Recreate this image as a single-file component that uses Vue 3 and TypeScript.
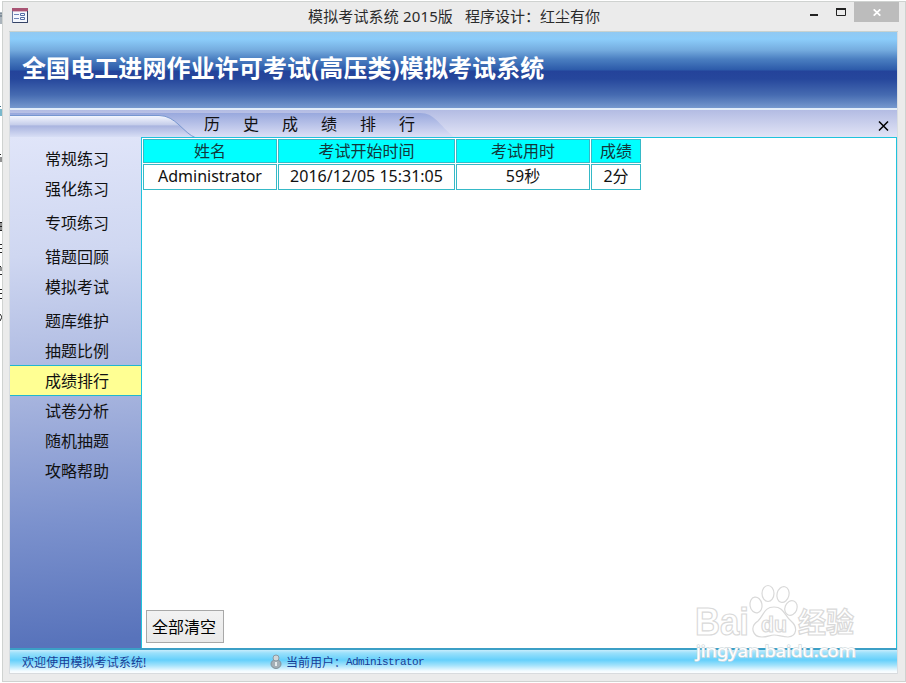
<script setup lang="ts">
import { ref } from 'vue'

interface MenuItem { label: string; spaced?: boolean }

const menu: MenuItem[] = [
  { label: '常规练习' },
  { label: '强化练习', spaced: true },
  { label: '专项练习', spaced: true },
  { label: '错题回顾' },
  { label: '模拟考试', spaced: true },
  { label: '题库维护' },
  { label: '抽题比例' },
  { label: '成绩排行' },
  { label: '试卷分析' },
  { label: '随机抽题' },
  { label: '攻略帮助' },
]
const active = ref('成绩排行')
const columns = ['姓名', '考试开始时间', '考试用时', '成绩']
const rows = ref<string[][]>([['Administrator', '2016/12/05 15:31:05', '59秒', '2分']])
</script>

<template>
  <div class="desktop">
    <svg class="behind" width="3" height="683" viewBox="0 0 3 683">
      <path d="M0 13h2M0 16h2M1 13v11" stroke="#566879" fill="none" />
      <path d="M0 106.500h1M0 110.500h1" stroke="#456f86" />
      <rect x="0" y="109" width="2" height="7" fill="#79b8cc" />
      <path d="M0 154.500h1M1 157v5M0 222.500h2M0 226.500h2M0 230.500h2M1 222v8M0 244.500h2M0 248.500h2M0 252.500h2M0 266.500h1M1 267v4M0 274.500h2M0 289.500h2M0 293.500h2M0 298.500h2M0 314l2 3l-2 4" stroke="#222" fill="none" />
    </svg>
    <main class="window">
      <header class="titlebar">
        <svg class="app-icon" width="16" height="15" viewBox="0 0 16 15">
          <rect x=".5" y=".5" width="15" height="14" fill="#f4f7fd" stroke="#65759b" />
          <rect width="16" height="3" fill="#a85373" />
          <path d="M1 3.500h14" stroke="#d8b7c9" />
          <path d="M15.500 3v11.500H1" fill="none" stroke="#354365" />
          <path d="M2 6.500h5M2 10.500h5" stroke="#6f86b8" />
          <path d="M8.500 5.500h4v2h-4zM8.500 9.500h4v2h-4z" fill="#fff" stroke="#526ca6" />
        </svg>
        <h1 class="caption"><span>模拟考试系统 2015版</span><span>程序设计：红尘有你</span></h1>
        <div class="controls">
          <button class="ctl min" aria-label="最小化"><svg width="8" height="2"><rect width="8" height="2" fill="#222" /></svg></button>
          <button class="ctl max" aria-label="最大化"><svg width="10" height="8"><path d="M.5 1v6.500h9V1" fill="none" stroke="#222" /><path d="M0 1h10" stroke="#222" stroke-width="2" /></svg></button>
          <button class="ctl close" aria-label="关闭"><svg width="8" height="7"><path d="M.7 .3l6.600 6.400M7.300 .3L.7 6.700" stroke="#fff" stroke-width="1.700" /></svg></button>
        </div>
      </header>
      <div class="client">
        <div class="banner">全国电工进网作业许可考试(高压类)模拟考试系统</div>
        <div class="tabs">
          <svg class="tab-shape" width="887" height="27" viewBox="0 0 887 27">
            <defs>
              <linearGradient id="strip" x2="0" y2="1"><stop stop-color="#b3bce3" /><stop offset="1" stop-color="#e2e4f6" /></linearGradient>
              <linearGradient id="tab" x2="0" y2="1"><stop stop-color="#98a8dd" /><stop offset="1" stop-color="#dcdff5" /></linearGradient>
              <linearGradient id="left" x2="0" y2="1"><stop stop-color="#f6f8ff" /><stop offset=".42" stop-color="#c5cdea" /><stop offset=".46" stop-color="#a9b4df" /><stop offset="1" stop-color="#dce2f7" /></linearGradient>
            </defs>
            <rect width="887" height="27" fill="url(#strip)" />
            <path d="M0 3H410C425 3 429 15 444 27H0z" fill="url(#tab)" />
            <path d="M-2 5.500H149C166 5.500 173 23 186 28H-2z" fill="url(#left)" stroke="#7796cf" />
          </svg>
          <span class="tab-title">历史成绩排行</span>
          <button class="tab-close" aria-label="关闭"><svg width="11" height="10"><path d="M1 .5l9 9M10 .5l-9 9" stroke="#000" stroke-width="1.500" /></svg></button>
        </div>
        <div class="body">
          <nav class="sidebar">
            <button v-for="m in menu" :key="m.label" class="item" :class="{ spaced: m.spaced, active: m.label === active }" @click="active = m.label">{{ m.label }}</button>
          </nav>
          <section class="content">
            <div class="grid head"><div v-for="c in columns" :key="c" class="cell">{{ c }}</div></div>
            <div v-for="(r, i) in rows" :key="i" class="grid row"><div v-for="c in r" :key="c" class="cell"><span>{{ c }}</span></div></div>
            <button class="clear" @click="rows = []">全部清空</button>
          </section>
        </div>
        <footer class="status">
          <span class="welcome">欢迎使用模拟考试系统!</span>
          <svg class="user" width="12" height="15" viewBox="0 0 12 15">
            <ellipse cx="6" cy="10" rx="5" ry="4.500" fill="#a3afb6" stroke="#82929b" />
            <circle cx="6" cy="4" r="3" fill="#d0d6d9" stroke="#8999a2" />
            <path d="M6 8v4" stroke="#e5eaec" stroke-width="2" fill="none" />
          </svg>
          <span>当前用户：</span><span class="name">Administrator</span>
        </footer>
      </div>
    </main>
    <svg class="watermark" width="170" height="82" viewBox="0 0 170 82">
      <g fill="#fff" stroke="#d9d9d9" stroke-width="1.200">
        <text class="logo" x="2" y="55" font-size="38" textLength="54" lengthAdjust="spacingAndGlyphs">Bai</text>
        <ellipse cx="63" cy="25" rx="6" ry="8" transform="rotate(-10 63 25)" />
        <ellipse cx="75" cy="13.500" rx="6" ry="8" />
        <ellipse cx="90" cy="14.500" rx="6" ry="8" transform="rotate(14 90 14.500)" />
        <ellipse cx="98" cy="28" rx="6" ry="7.500" transform="rotate(22 98 28)" />
        <path d="M81 27C71 27 71 35 65 41C56 47 60 57 69 57C75 57 77 55 81 55C86 55 89 57 95 57C104 56 105 47 98 41C91 35 91 27 81 27z" />
        <text class="logo" x="68" y="52" font-size="22" textLength="26" lengthAdjust="spacingAndGlyphs">du</text>
        <text class="logo" x="105" y="53" font-size="28" textLength="56" lengthAdjust="spacingAndGlyphs">经验</text>
      </g>
      <text class="url" x="3" y="77" textLength="160" lengthAdjust="spacingAndGlyphs">jingyan.baidu.com</text>
    </svg>
  </div>
</template>

<style>
body { margin: 0; overflow: hidden; }
</style>

<style scoped>
* { box-sizing: border-box; }
button { margin: 0; padding: 0; border: 0; background: none; font: inherit; color: inherit; }
svg { display: block; flex: none; }
.desktop { position: relative; width: 906px; height: 683px; padding: 1px 0 1px 2px; background: #fff; overflow: hidden; font-family: "Noto Sans", "Noto Sans CJK SC", sans-serif; color: #111; }
.behind { position: absolute; left: 0; top: 0; }
.window { position: relative; width: 904px; height: 681px; border: 1px solid #cfd2d0; background: #ebebeb; padding: 0 7px 7px 6px; }
.titlebar { position: relative; height: 30px; display: flex; align-items: flex-start; border-bottom: 1px solid #c9d2cf; }
.app-icon { margin: 6px 0 0 3px; }
.caption { margin: 3px 0 0 280px; display: flex; gap: 11px; font-size: 15px; line-height: 22px; font-weight: 400; color: #2b2b2b; white-space: nowrap; }
.caption span:first-child { width: 146px; letter-spacing: .15px; }
.controls { display: flex; margin-left: auto; margin-right: -1px; height: 20px; }
.ctl { display: flex; align-items: center; justify-content: center; }
.min { width: 27px; padding-top: 5px; }
.max { width: 27px; }
.close { width: 45px; background: #bcbcbc; }
.client { width: 889px; border-left: 1px solid #d9dde1; border-right: 1px solid #d9dde1; }
.banner { height: 76px; padding: 0 0 7px 12px; display: flex; align-items: center; color: #fff; font-size: 24px; letter-spacing: .09px; font-weight: 700; white-space: nowrap; background: linear-gradient(#91c9f2 0, #8ccdfa 7px, #75acdf 18px, #4b7fc1 27px, #2c5aa9 38px, #24439a 39px, #26479c 47px, #466bb1 63px, #7699ce 100%); }
.tabs { height: 29px; border-top: 2px solid #e2edf9; position: relative; display: flex; align-items: center; }
.tab-shape { position: absolute; left: 0; top: 0; }
.tab-title { position: relative; margin-left: 194px; padding-top: 1px; font-size: 16px; letter-spacing: 23px; line-height: 24px; }
.tab-close { position: relative; margin-left: auto; margin-right: 8px; padding-top: 4px; }
.body { height: 513px; display: flex; border-bottom: 2px solid #3b9fc6; }
.sidebar { width: 131px; padding-top: 7px; display: flex; flex-direction: column; background: linear-gradient(176deg, #e0e5f9 0, #cfd7f1 23%, #a9b6df 49%, #7b91cd 75%, #5873bb 98%); }
.item { height: 30px; padding-left: 35px; text-align: left; font-size: 16px; line-height: 30px; flex: none; }
.item.spaced { margin-bottom: 4px; }
.item.active { height: 31px; margin-top: -1px; padding-top: 1px; line-height: 29px; background: #ffff93; border-top: 1px solid #20b7cf; border-bottom: 1px solid #20b7cf; }
.content { flex: 1; display: flex; flex-direction: column; align-items: flex-start; padding: 1px 0 5px 1px; background: #fff; border: 1px solid #1fc3dc; border-bottom: 0; }
.grid { display: grid; grid-template-columns: 134px 177px 134px 50px; column-gap: 1px; }
.head { grid-template-rows: 24px; }
.row { grid-template-rows: 26px; margin-top: 1px; }
.cell { display: flex; align-items: center; justify-content: center; border: 1px solid #35b9c7; font-size: 16px; line-height: 22px; white-space: nowrap; }
.row .cell { padding-bottom: 2px; }
.head .cell { background: #00ffff; color: #12383b; }
.clear { width: 78px; height: 33px; margin-top: auto; margin-left: 3px; padding: 0 2px 2px 0; background: linear-gradient(#f2f2f2, #e9e9e9); border: 1px solid #a8a8a8; font-size: 16px; color: #000; }
.status { height: 24px; display: flex; align-items: center; padding-left: 12px; color: #173d96; font-size: 12px; white-space: nowrap; background: linear-gradient(#c7ecfc 0, #9ae0fb 3px, #65d0fb 10px, #9fe1fb 15px, #f3fbff 21px, #fff 24px); border-bottom: 1px solid #d8dbde; }
.welcome { width: 248px; letter-spacing: .1px; }
.user { margin-right: 4px; }
.name { font-family: "Liberation Mono", monospace; font-size: 11px; letter-spacing: -.6px; }
.watermark { position: absolute; left: 693px; top: 580px; }
.logo { font-family: "Liberation Sans", "Noto Sans CJK SC", sans-serif; font-weight: 700; }
.url { font-family: "Noto Sans", sans-serif; font-size: 17px; font-weight: 400; fill: #fff; stroke: #d2dce0; stroke-width: 1.400px; paint-order: stroke; }
</style>
